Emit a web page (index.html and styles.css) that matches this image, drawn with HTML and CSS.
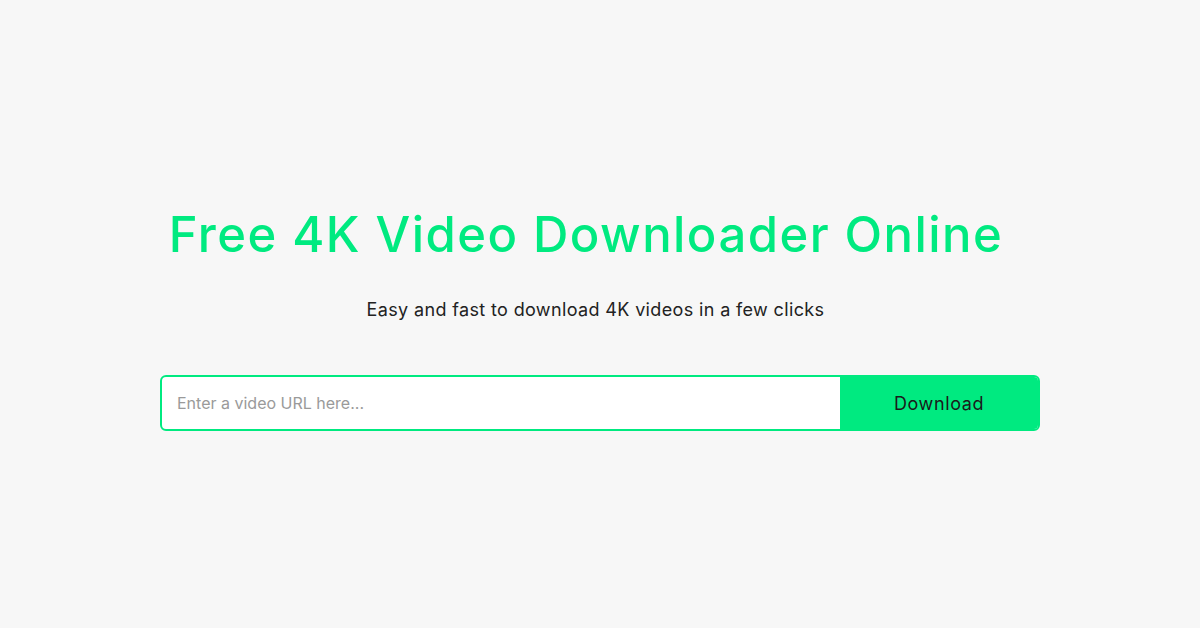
FILE: index.html
```html
<!DOCTYPE html>
<html lang="en">
<head>
<meta charset="utf-8">
<title>Free 4K Video Downloader Online</title>
<link rel="stylesheet" href="styles.css">
</head>
<body>
<main class="hero">
  <h1 class="title">Free 4K Video Downloader Online</h1>
  <p class="subtitle">Easy and fast to download 4K videos in a few clicks</p>
  <form class="search">
    <input class="search-input" type="text" placeholder="Enter a video URL here...">
    <button class="search-button" type="button">Download</button>
  </form>
</main>
</body>
</html>
```
FILE: styles.css
```css
html, body {
  margin: 0;
  padding: 0;
  background: #f7f7f7;
}
body {
  width: 1200px;
  height: 628px;
  overflow: hidden;
  font-family: "Inter", "Open Sans", sans-serif;
}
.hero {
  display: flex;
  flex-direction: column;
  align-items: center;
  padding-top: 205px;
}
.title {
  margin: 0;
  padding-right: 28px;
  font-size: 49px;
  line-height: 60px;
  font-weight: 500;
  color: #00ea80;
  letter-spacing: 1.45px;
}
.subtitle {
  margin: 33px 0 0;
  font-size: 18px;
  line-height: 24px;
  color: #222222;
  padding-right: 9px;
  letter-spacing: 0.36px;
}
.search {
  margin-top: 53px;
  width: 880px;
  height: 56px;
  display: flex;
  box-sizing: border-box;
  border: 2px solid #00ea80;
  border-radius: 6px;
  background: #ffffff;
  overflow: hidden;
}
.search-input {
  flex: 1;
  border: 0;
  outline: none;
  padding: 0 15px;
  font-family: inherit;
  font-size: 16px;
  color: #333;
  background: transparent;
}
.search-input::placeholder {
  color: #9a9a9a;
}
.search-button {
  width: 198px;
  border: 0;
  background: #00ea80;
  font-family: inherit;
  font-size: 18px;
  letter-spacing: 0.6px;
  color: #1a1a1a;
  cursor: pointer;
}
```
